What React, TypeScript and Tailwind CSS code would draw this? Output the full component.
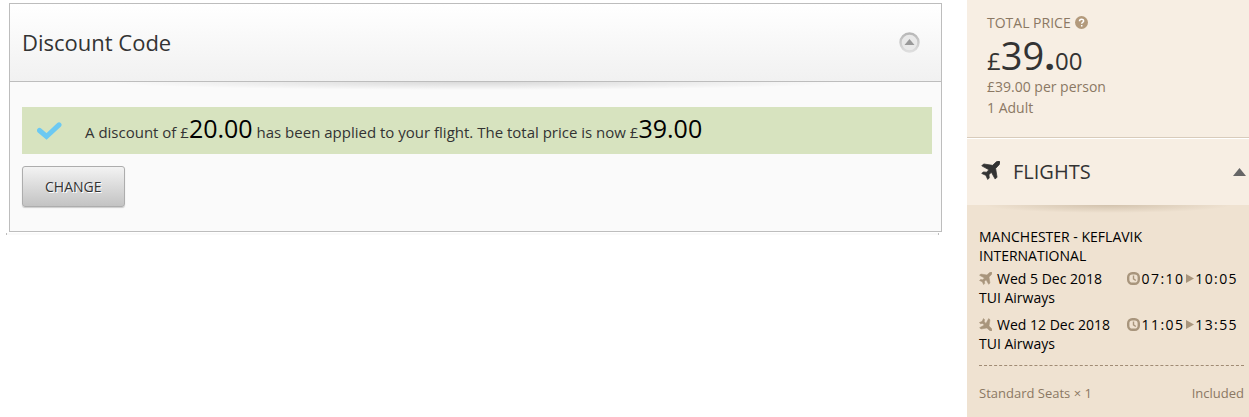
const flights = [
  { date: "Wed 5 Dec 2018", airline: "TUI Airways", departs: "07:10", arrives: "10:05", inbound: false },
  { date: "Wed 12 Dec 2018", airline: "TUI Airways", departs: "11:05", arrives: "13:55", inbound: true },
];

const PlaneIcon = ({ className }: { className: string }) => (
  <svg viewBox="0 0 20 20" className={className} fill="currentColor" aria-hidden="true">
    <path d="M19.600.4c.8 1.200.3 2.600-.7 3.700l-3.500 3.700 1.500 9.200-2 2-4-7.200-2.500 2.700.3 3.300-1.600 1.600-2-4.300-4.300-2 1.600-1.600 3.300.3 2.700-2.500L.8 5.100l2-2 9.400 1.500L15.900 1.100c1.100-1 2.700-1.500 3.700-.7z" stroke="currentColor" strokeWidth=".8" strokeLinejoin="round" />
  </svg>
);

const ClockIcon = () => (
  <svg viewBox="0 0 13 13" className="size-[13px] shrink-0 text-[#a8957c]" aria-hidden="true">
    <rect x="1.200" y="1.200" width="10.600" height="10.600" rx="4" fill="none" stroke="currentColor" strokeWidth="2.400" />
    <path d="M6.500 3.500v3.300l2.300 1.700" fill="none" stroke="currentColor" strokeWidth="1.400" />
  </svg>
);

const DiscountPanel = () => (
  <section className="ml-[3px] border border-[#bdbdbd] bg-[#fafafa]">
    <div className="flex h-[78px] items-center justify-between border-b border-[#bdbdbd] bg-linear-to-b from-white to-[#f1f1f1] pr-[21px] pl-3">
      <h2 className="text-[22px] text-[#333]">Discount Code</h2>
      <button type="button" aria-label="Collapse discount code" className="size-[21px]">
        <svg viewBox="0 0 21 21" aria-hidden="true">
          <defs>
            <linearGradient id="knob" x1="0" y1="0" x2="0" y2="1">
              <stop offset="0" stopColor="#b8b8b8" />
              <stop offset="1" stopColor="#dedede" />
            </linearGradient>
          </defs>
          <circle cx="10.500" cy="10.500" r="9" fill="#e9e9e9" stroke="url(#knob)" strokeWidth="2.400" />
          <path d="M10.500 7l5 6h-10z" fill="#999" />
        </svg>
      </button>
    </div>
    <div className="h-2 bg-[radial-gradient(ellipse_40%_100%_at_50%_0,rgba(0,0,0,0.13),transparent)]" />
    <div className="pt-[17px] pr-[9px] pb-6 pl-3">
      <div className="flex h-[47px] items-center bg-[#d7e3bf] pl-[15px]">
        <svg viewBox="0 0 25 18" className="w-[25px] shrink-0" aria-hidden="true">
          <path d="M2.500 8.500l7 6L22 2.800" fill="none" stroke="#6cc9f2" strokeWidth="5" strokeLinecap="round" />
        </svg>
        <p className="pb-1 pl-[23px] text-[15px] text-[#333]">
          A discount of £<span className="text-[25px] text-black">20.00</span> has been applied to your flight. The
          total price is now £<span className="text-[25px] text-black">39.00</span>
        </p>
      </div>
      <button
        type="button"
        className="mt-3 h-[41px] rounded-[3px] border border-[#adadad] bg-linear-to-b from-[#f3f3f3] to-[#c3c3c3] px-[22px] text-sm text-[#333] shadow-[0_1px_1px_#ccc] text-shadow-[1px_1px_0_white]"
      >
        CHANGE
      </button>
    </div>
  </section>
);

const PriceSummary = () => (
  <aside className="w-[282px] shrink-0 bg-[#efe2d1]">
    <div className="h-[138px] border-b border-[#d8cbbb] bg-[#f7eee3] px-5 pt-3 text-sm leading-[21px] text-[#8b7863]">
      <h2 className="flex items-center gap-1">
        TOTAL PRICE
        <svg viewBox="0 0 13 13" className="size-[13px]" aria-hidden="true">
          <circle cx="6.500" cy="6.500" r="6.500" fill="#b39a7c" />
          <path d="M4.500 5.200c0-2.800 4.100-2.600 4.100-.3 0 1.300-1.900 1.400-1.900 2.900M6.700 8.900v1.500" fill="none" stroke="#fff" strokeWidth="1.500" />
        </svg>
      </h2>
      <p className="flex h-[43px] items-baseline text-2xl leading-[43px] text-[#333]">
        £
        <span className="text-[38px] leading-[45px]">
          39<b>.</b>
        </span>
        00
      </p>
      <p>£39.00 per person</p>
      <p>1 Adult</p>
    </div>
    <div className="flex h-[67px] items-center border-t border-white bg-[#f7eee3] pr-[3px] pl-[14px] text-[#333]">
      <PlaneIcon className="mb-1 size-[19px]" />
      <h2 className="flex-1 pl-[13px] text-xl">FLIGHTS</h2>
      <button type="button" aria-label="Collapse flights">
        <svg viewBox="0 0 13 8" className="w-[13px]" aria-hidden="true">
          <path d="M6.500 0L13 8H0z" fill="#666" />
        </svg>
      </button>
    </div>
    <div className="h-2 bg-[radial-gradient(ellipse_44%_100%_at_50%_0,rgba(80,50,10,0.18),transparent)]" />
    <div className="pt-[14px] pr-[5px] pb-3 pl-3 text-sm leading-[19px] text-black">
      <h3>
        MANCHESTER - KEFLAVIK
        <br />
        INTERNATIONAL
      </h3>
      {flights.map((flight) => (
        <div key={flight.date} className="py-1">
          <div className="flex items-center pr-[6px]">
            <PlaneIcon className={flight.inbound ? "size-[13px] rotate-90 text-[#a8957c]" : "size-[13px] text-[#a8957c]"} />
            <span className="flex-1 pl-[5px]">{flight.date}</span>
            <ClockIcon />
            <span className="pl-[2px] tracking-widest">{flight.departs}</span>
            <svg viewBox="0 0 8 9" className="ml-[2px] w-2" aria-hidden="true">
              <path d="M0 0l8 4.500L0 9z" fill="#a8957c" />
            </svg>
            <span className="pl-px tracking-widest">{flight.arrives}</span>
          </div>
          <p>{flight.airline}</p>
        </div>
      ))}
      <div className="mt-2 flex justify-between border-t border-dashed border-[#a08b74] pt-[18px] text-[13px] text-[#8b7863]">
        <span>Standard Seats × 1</span>
        <span>Included</span>
      </div>
    </div>
  </aside>
);

export default function App() {
  return (
    <div className="flex min-h-screen bg-white font-['Open_Sans',sans-serif]">
      <main className="min-w-0 flex-1 pt-[3px] pr-[25px] pl-[6px]">
        <DiscountPanel />
        {/* top edge of the next, empty panel */}
        <div className="mt-px mr-[3px] h-[2px] border-x border-[#bdbdbd] bg-[#fafafa]" />
      </main>
      <PriceSummary />
    </div>
  );
}
